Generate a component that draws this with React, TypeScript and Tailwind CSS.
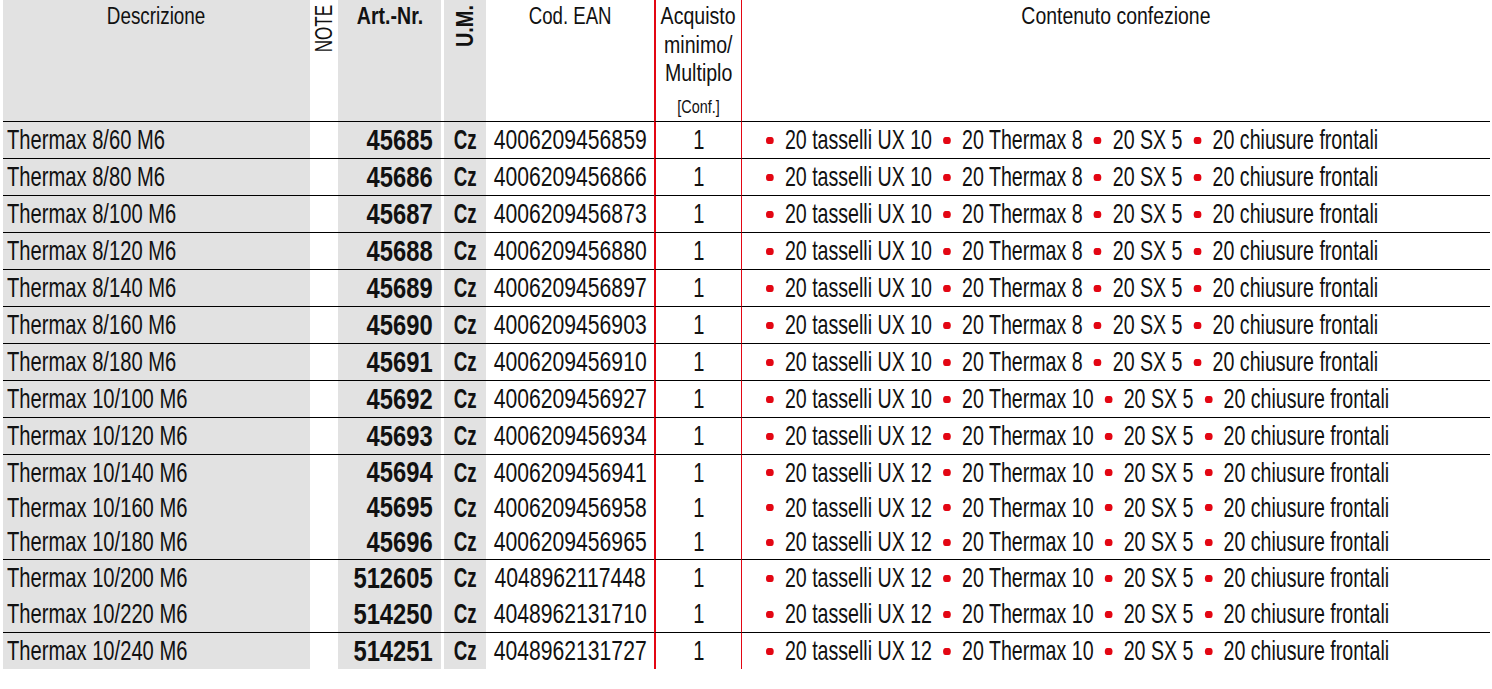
import React from "react";

interface Item {
  name: string;
  art: string;
  ean: string;
  ux: string;
  th: string;
  h: string;
  line: boolean;
}

const rows: Item[] = [
  { name: "Thermax 8/60 M6", art: "45685", ean: "4006209456859", ux: "10", th: "8", h: "h-[37px]", line: true },
  { name: "Thermax 8/80 M6", art: "45686", ean: "4006209456866", ux: "10", th: "8", h: "h-[37px]", line: true },
  { name: "Thermax 8/100 M6", art: "45687", ean: "4006209456873", ux: "10", th: "8", h: "h-[37px]", line: true },
  { name: "Thermax 8/120 M6", art: "45688", ean: "4006209456880", ux: "10", th: "8", h: "h-[37px]", line: true },
  { name: "Thermax 8/140 M6", art: "45689", ean: "4006209456897", ux: "10", th: "8", h: "h-[37px]", line: true },
  { name: "Thermax 8/160 M6", art: "45690", ean: "4006209456903", ux: "10", th: "8", h: "h-[37px]", line: true },
  { name: "Thermax 8/180 M6", art: "45691", ean: "4006209456910", ux: "10", th: "8", h: "h-[37px]", line: true },
  { name: "Thermax 10/100 M6", art: "45692", ean: "4006209456927", ux: "10", th: "10", h: "h-[37px]", line: true },
  { name: "Thermax 10/120 M6", art: "45693", ean: "4006209456934", ux: "12", th: "10", h: "h-[37px]", line: true },
  { name: "Thermax 10/140 M6", art: "45694", ean: "4006209456941", ux: "12", th: "10", h: "h-[35px]", line: false },
  { name: "Thermax 10/160 M6", art: "45695", ean: "4006209456958", ux: "12", th: "10", h: "h-[35px]", line: false },
  { name: "Thermax 10/180 M6", art: "45696", ean: "4006209456965", ux: "12", th: "10", h: "h-[35px]", line: true },
  { name: "Thermax 10/200 M6", art: "512605", ean: "4048962117448", ux: "12", th: "10", h: "h-[36px]", line: false },
  { name: "Thermax 10/220 M6", art: "514250", ean: "4048962131710", ux: "12", th: "10", h: "h-[37px]", line: true },
  { name: "Thermax 10/240 M6", art: "514251", ean: "4048962131727", ux: "12", th: "10", h: "h-[36px]", line: false },
];

// condensed look: Liberation Sans squeezed horizontally
const Dot = () => <span className="block w-[11px] h-[7px] rounded-full bg-[#e30613] shrink-0" />;

const Row = ({ r }: { r: Item }) => {
  const b = r.line ? "border-b border-b-black" : "";
  const parts = [`20 tasselli UX ${r.ux}`, `20 Thermax ${r.th}`, "20 SX 5", "20 chiusure frontali"];
  return (
    <div className={`flex ${r.h}`}>
      <div className={`w-[307px] shrink-0 bg-[#e2e2e2] pl-[4px] flex items-center overflow-hidden ${b}`}>
        <span className="inline-block origin-left scale-x-[0.72] whitespace-nowrap text-[28px] leading-none">{r.name}</span>
      </div>
      <div className={`w-[28px] shrink-0 ${b}`} />
      <div className={`w-[103px] shrink-0 bg-[#e2e2e2] flex items-center justify-end pr-[8px] ${b}`}>
        <span className="inline-block origin-right scale-x-[0.82] text-[29px] font-bold leading-none">{r.art}</span>
      </div>
      <div className={`w-[3px] shrink-0 ${b}`} />
      <div className={`w-[42px] shrink-0 bg-[#e2e2e2] flex items-center justify-center ${b}`}>
        <span className="inline-block scale-x-[0.67] text-[28px] font-bold leading-none">Cz</span>
      </div>
      <div className={`w-[168px] shrink-0 flex items-center justify-center overflow-hidden ${b}`}>
        <span className="inline-block shrink-0 scale-x-[0.755] whitespace-nowrap text-[28px] leading-none">{r.ean}</span>
      </div>
      <div className={`w-[88px] shrink-0 border-l-2 border-r border-l-[#e30613] border-r-[#e30613] flex items-center justify-center ${b}`}>
        <span className="inline-block scale-x-[0.72] text-[28px] leading-none">1</span>
      </div>
      <div className={`flex-1 min-w-0 pl-[24px] flex items-center overflow-hidden ${b}`}>
        <span className="inline-flex shrink-0 items-center gap-[16px] origin-left scale-x-[0.7] whitespace-nowrap text-[28px] leading-none">
          {parts.map((p, i) => (
            <React.Fragment key={i}>
              <Dot />
              <span>{p}</span>
            </React.Fragment>
          ))}
        </span>
      </div>
    </div>
  );
};

export default function App() {
  return (
    <div className="w-[1492px] h-[689px] bg-white text-[#111] font-['Liberation_Sans',Arial,sans-serif] overflow-hidden">
      <div className="ml-[3px] w-[1487px]">
        <div className="flex h-[122px] text-[23px] leading-[28.5px]">
          <div className="w-[307px] shrink-0 bg-[#e2e2e2] border-b border-b-black pt-[2px] flex justify-center items-start">
            <span className="inline-block scale-x-[0.82] whitespace-nowrap">Descrizione</span>
          </div>
          <div className="w-[28px] shrink-0 border-b border-b-black pt-[5px] flex justify-center items-start">
            <div className="origin-top scale-y-[0.74]">
              <span className="block [writing-mode:vertical-rl] rotate-180 leading-none">NOTE</span>
            </div>
          </div>
          <div className="w-[103px] shrink-0 bg-[#e2e2e2] border-b border-b-black pt-[2px] flex justify-center items-start">
            <span className="inline-block scale-x-[0.85] whitespace-nowrap font-bold">Art.-Nr.</span>
          </div>
          <div className="w-[3px] shrink-0 border-b border-b-black" />
          <div className="w-[42px] shrink-0 bg-[#e2e2e2] border-b border-b-black pt-[5px] flex justify-center items-start">
            <div className="origin-top scale-y-[0.83]">
              <span className="block [writing-mode:vertical-rl] rotate-180 leading-none font-bold text-[24px]">U.M.</span>
            </div>
          </div>
          <div className="w-[168px] shrink-0 border-b border-b-black pt-[2px] flex justify-center items-start">
            <span className="inline-block scale-x-[0.81] whitespace-nowrap">Cod. EAN</span>
          </div>
          <div className="w-[88px] shrink-0 border-l-2 border-r border-l-[#e30613] border-r-[#e30613] border-b border-b-black pt-[2px] flex flex-col items-center overflow-hidden">
            <span className="inline-block scale-x-[0.85] whitespace-nowrap">Acquisto</span>
            <span className="inline-block scale-x-[0.85] whitespace-nowrap">minimo/</span>
            <span className="inline-block scale-x-[0.85] whitespace-nowrap">Multiplo</span>
            <span className="inline-block mt-[9px] scale-x-[0.8] whitespace-nowrap text-[18px] leading-[20px]">[Conf.]</span>
          </div>
          <div className="flex-1 border-b border-b-black pt-[2px] flex justify-center items-start">
            <span className="inline-block scale-x-[0.845] whitespace-nowrap">Contenuto confezione</span>
          </div>
        </div>
        {rows.map((r) => (
          <Row key={r.art} r={r} />
        ))}
      </div>
    </div>
  );
}
